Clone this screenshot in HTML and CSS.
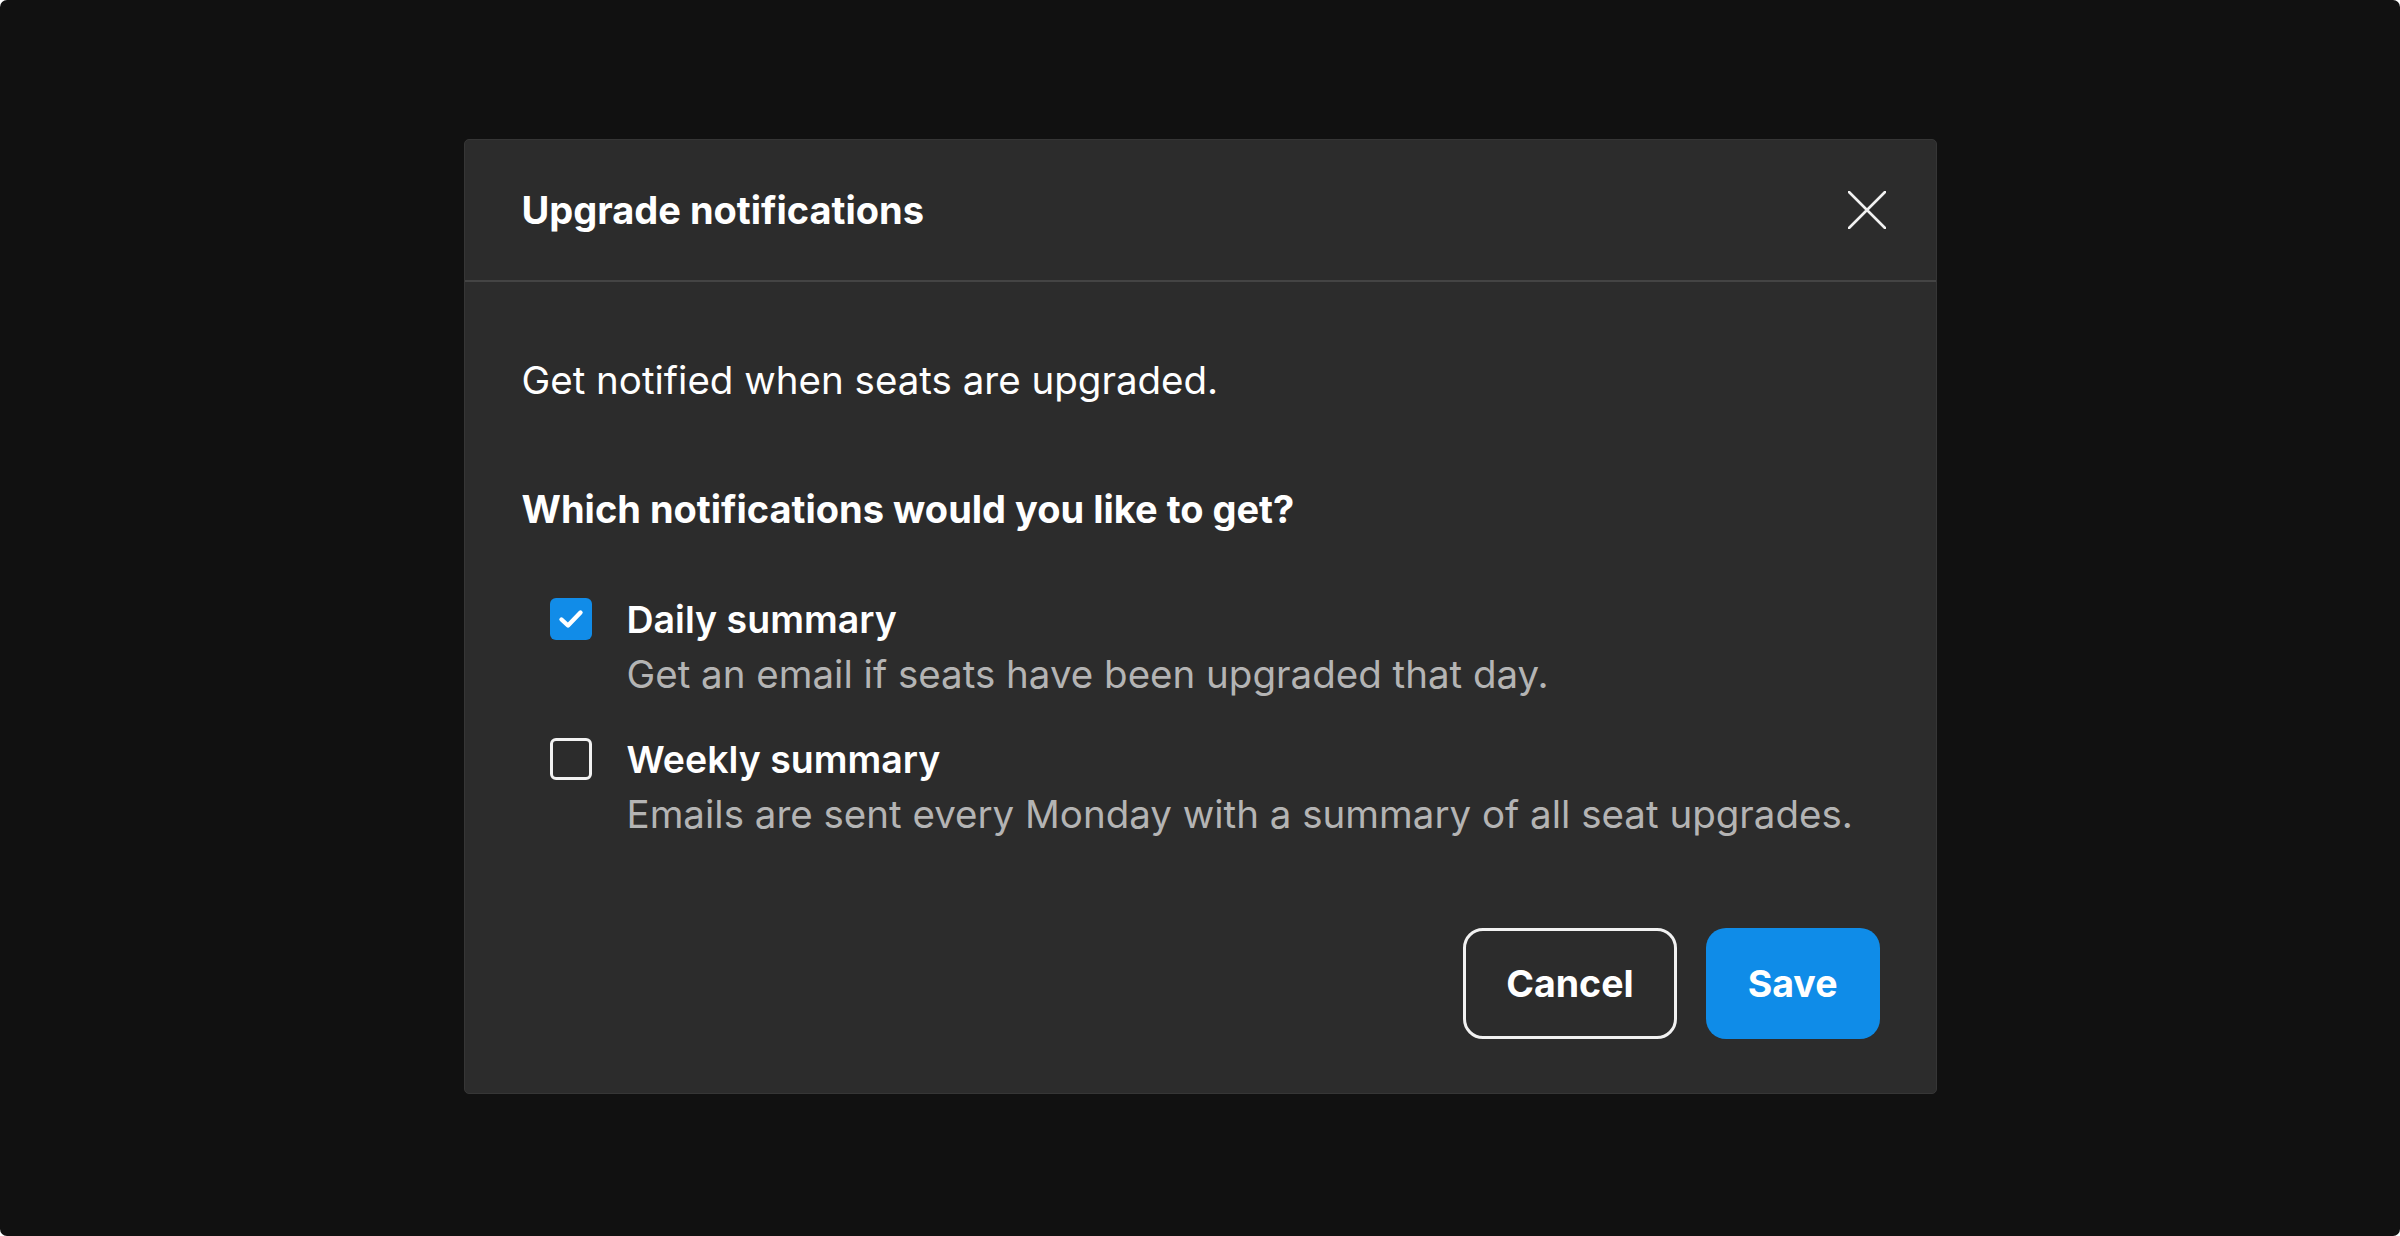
FILE: index.html
```html
<!DOCTYPE html>
<html lang="en">
<head>
<meta charset="utf-8">
<title>Upgrade notifications</title>
<link rel="stylesheet" href="styles.css">
</head>
<body>
<div class="screen">
  <div class="dialog" role="dialog" aria-labelledby="dlg-title">
    <div class="dialog-header">
      <h2 class="dialog-title" id="dlg-title">Upgrade notifications</h2>
      <button class="close-btn" aria-label="Close">
        <svg viewBox="0 0 38 38" width="38" height="38" aria-hidden="true">
          <path d="M1 1 L37 37 M37 1 L1 37" stroke="#f2f2f2" stroke-width="2.6" stroke-linecap="round" fill="none"/>
        </svg>
      </button>
    </div>
    <div class="dialog-body">
      <p class="intro">Get notified when seats are upgraded.</p>
      <p class="question">Which notifications would you like to get?</p>
      <div class="options">
        <div class="option">
          <span class="checkbox checked">
            <svg viewBox="0 0 42 42" width="42" height="42" aria-hidden="true">
              <path d="M11.5 21.5 L18 27.5 L30.5 14.5" stroke="#fff" stroke-width="4.4" stroke-linecap="round" stroke-linejoin="round" fill="none"/>
            </svg>
          </span>
          <div class="option-text">
            <div class="option-label">Daily summary</div>
            <div class="option-desc">Get an email if seats have been upgraded that day.</div>
          </div>
        </div>
        <div class="option">
          <span class="checkbox"></span>
          <div class="option-text">
            <div class="option-label">Weekly summary</div>
            <div class="option-desc">Emails are sent every Monday with a summary of all seat upgrades.</div>
          </div>
        </div>
      </div>
      <div class="actions">
        <button class="btn btn-secondary">Cancel</button>
        <button class="btn btn-primary">Save</button>
      </div>
    </div>
  </div>
</div>
</body>
</html>
```

FILE: styles.css
```css
* { box-sizing: border-box; }

html, body {
  margin: 0;
  padding: 0;
  background: #ffffff;
}

body {
  font-family: Inter, "Noto Sans", "Liberation Sans", sans-serif;
  color: #ffffff;
}

.screen {
  width: 2400px;
  height: 1236px;
  background: #111111;
  border-radius: 7px;
  display: flex;
  align-items: center;
  justify-content: center;
}

.dialog {
  width: 1473px;
  background: #2c2c2c;
  border: 1px solid #363636;
  border-radius: 5px;
  margin-top: -4px;
}

.dialog-header {
  height: 142px;
  display: flex;
  align-items: center;
  justify-content: space-between;
  padding: 0 50px 0 57px;
  border-bottom: 2px solid #444444;
}

.dialog-title {
  margin: 0;
  font-size: 38px;
  font-weight: 700;
  letter-spacing: 0;
}

.close-btn {
  background: none;
  border: 0;
  padding: 0;
  width: 38px;
  height: 38px;
  display: flex;
  cursor: pointer;
}

.dialog-body {
  padding: 74px 56px 54px 57px;
}

.intro {
  margin: 0;
  font-size: 38.5px;
  line-height: 48px;
  font-weight: 400;
}

.question {
  margin: 81px 0 0;
  font-size: 38px;
  line-height: 48px;
  font-weight: 700;
}

.options {
  margin-top: 59px;
  display: flex;
  flex-direction: column;
  gap: 30px;
}

.option {
  display: flex;
  align-items: flex-start;
  gap: 35px;
  padding-left: 28px;
}

.checkbox {
  flex: none;
  width: 42px;
  height: 42px;
  margin-top: 6px;
  border-radius: 6px;
  border: 3px solid #f2f2f2;
  display: flex;
}

.checkbox.checked {
  background: #118ce8;
  border: 0;
}

.option-label {
  font-size: 37.5px;
  line-height: 55px;
  font-weight: 600;
}

.option-desc {
  font-size: 38.5px;
  line-height: 55px;
  font-weight: 400;
  color: #b4b4b4;
}

.actions {
  margin-top: 86px;
  display: flex;
  justify-content: flex-end;
  gap: 29px;
}

.btn {
  height: 111px;
  border-radius: 20px;
  font-family: inherit;
  font-size: 37.5px;
  font-weight: 700;
  color: #ffffff;
  cursor: pointer;
}

.btn-secondary {
  padding: 0 40px;
  background: transparent;
  border: 3px solid #f2f2f2;
}

.btn-primary {
  padding: 0 42px;
  background: #0f8ce8;
  border: 0;
}
```
